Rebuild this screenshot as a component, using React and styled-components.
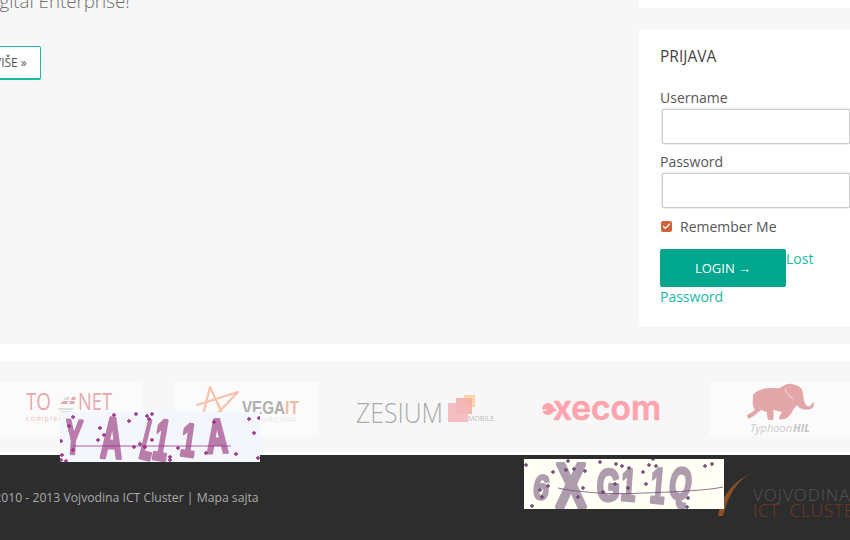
import React from "react";
import styled, { createGlobalStyle } from "styled-components";
import { Check } from "lucide-react";

const GlobalStyle = createGlobalStyle`
  html, body { margin: 0; padding: 0; background: #fff; }
  body { font-family: "Open Sans", "Liberation Sans", sans-serif; overflow: hidden; }
`;

const Page = styled.div`
  position: relative;
  width: 850px;
  height: 540px;
  overflow: hidden;
`;

const Top = styled.section`
  display: flex;
  height: 344px;
  background: #f7f7f7;
`;
const Main = styled.div`
  flex: 1;
  min-width: 0;
  overflow: hidden;
`;
const Lead = styled.p`
  margin: -14px 0 0 -18px;
  font-size: 18.7px;
  font-weight: 300;
  line-height: 30px;
  color: #6e6e6e;
  white-space: nowrap;
`;
const MoreButton = styled.a`
  display: inline-block;
  box-sizing: border-box;
  height: 34px;
  margin: 30px 0 0 -31px;
  padding: 0 13px 0 24px;
  background: #fff;
  border: 1px solid #1abc9c;
  border-bottom-width: 2px;
  border-radius: 2px;
  font-size: 12px;
  line-height: 32px;
  color: #555;
`;
const Sidebar = styled.aside`
  width: 211px;
  flex: none;
`;
const TopStub = styled.div`
  height: 8px;
  margin-bottom: 21px;
  background: #fff;
`;
const LoginBox = styled.div`
  height: 297px;
  box-sizing: border-box;
  padding: 17px 0 0 21px;
  background: #fff;
`;
const BoxTitle = styled.h3`
  margin: 0 0 21px;
  font-size: 15.5px;
  font-weight: 400;
  line-height: 21px;
  color: #444;
`;
const Field = styled.div`
  margin-bottom: 8px;
`;
const Label = styled.label`
  display: block;
  margin-bottom: 1px;
  font-size: 14px;
  line-height: 20px;
  color: #555;
`;
const Input = styled.input`
  display: block;
  box-sizing: border-box;
  width: 188px;
  height: 35px;
  margin-left: 2px;
  background: #fff;
  border: 1px solid #ccc;
  box-shadow: 0 0 0 0.5px #ddd;
  border-radius: 2px;
`;
const RememberRow = styled.div`
  display: flex;
  align-items: center;
  gap: 8px;
  height: 20px;
  margin: 8px 0 13px 1px;
  font-size: 14px;
  color: #555;
`;
const CheckBox = styled.span`
  display: flex;
  align-items: center;
  justify-content: center;
  width: 11px;
  height: 11px;
  background: #d2623a;
  border-radius: 2px;
  color: #fff;
`;
const Actions = styled.div`
  width: 168px;
  font-size: 14px;
  line-height: 20px;
`;
const LoginButton = styled.button`
  display: inline-block;
  vertical-align: top;
  width: 126px;
  height: 38px;
  padding: 0;
  background: #00a68d;
  border: 0;
  border-radius: 2px;
  font-family: inherit;
  font-size: 13px;
  color: #fff;
`;
const TextLink = styled.a`
  color: #1ab8a4;
`;

const Gap = styled.div`
  height: 17px;
  background: #fff;
`;
const LogoBand = styled.section`
  display: flex;
  gap: 34px;
  height: 91px;
  box-sizing: border-box;
  padding: 21px 0 0 0;
  margin-bottom: 3px;
  background: #f7f7f7;
  overflow: hidden;
`;
const LogoCell = styled.div`
  flex: none;
  width: 144px;
  height: 54px;
  margin-left: ${(p) => p.$shift || 0}px;
  background: ${(p) => (p.$plate ? "rgba(255,255,255,0.55)" : "transparent")};
`;
const LogoArt = styled.svg`
  display: block;
  width: 144px;
  height: 54px;
  overflow: hidden;
`;

const Footer = styled.footer`
  display: flex;
  align-items: center;
  justify-content: space-between;
  height: 85px;
  background: #2d2d2d;
  overflow: hidden;
`;
const Copy = styled.p`
  margin: 0 0 0 -19px;
  font-size: 12.2px;
  line-height: 18px;
  color: #aaa;
  white-space: nowrap;
`;
const FooterLogo = styled.svg`
  display: block;
  flex: none;
  width: 135px;
  height: 60px;
  margin-bottom: 5px;
`;

const CaptchaBox = styled.svg`
  position: absolute;
  left: ${(p) => p.$left}px;
  top: ${(p) => p.$top}px;
  width: 200px;
  height: 50px;
  background: ${(p) => p.$bg};
`;
const Blurred = styled.g`
  filter: blur(0.7px);
`;

const Captcha = ({ left, top, bg, ink, dot, chars, dots, line }) => (
  <CaptchaBox $left={left} $top={top} $bg={bg} viewBox="0 0 200 50">
    <Blurred>
      {chars.map((c, i) => (
        <text
          key={i}
          transform={`translate(${c.x} ${c.y}) rotate(${c.r}) scale(${c.sx} ${c.sy})`}
          fontFamily="Liberation Sans, sans-serif"
          fontWeight="700"
          fontSize="30"
          fill={ink}
          stroke={ink}
          strokeWidth="2"
          strokeLinejoin="round"
        >
          {c.t}
        </text>
      ))}
    </Blurred>
    <path d={line} fill="none" stroke={dot} strokeOpacity="0.75" strokeWidth="1.2" />
    {dots.map(([x, y], i) => (
      <path key={i} d={`M${x - 2} ${y}h4M${x} ${y - 2}v4`} stroke={dot} strokeWidth="1.4" />
    ))}
  </CaptchaBox>
);

const firstChars = [
  { t: "Y", x: 4, y: 41, r: 4, sx: 0.85, sy: 1.6 },
  { t: "A", x: 40, y: 45, r: 3, sx: 1.0, sy: 1.9 },
  { t: "L", x: 78, y: 45, r: 14, sx: 0.7, sy: 1.85 },
  { t: "1", x: 91, y: 46, r: 10, sx: 0.9, sy: 1.9 },
  { t: "1", x: 119, y: 43, r: 8, sx: 0.9, sy: 1.55 },
  { t: "A", x: 147, y: 41, r: -2, sx: 1.0, sy: 1.6 },
];
const firstDots = [
  [13, 5], [9, 14], [1, 29], [13, 38], [2, 43], [6, 49], [1, 48], [54, 3], [40, 16], [44, 23],
  [38, 28], [69, 9], [76, 2], [87, 4], [92, 2], [89, 7], [92, 28], [80, 32], [74, 35], [85, 35],
  [118, 36], [110, 45], [110, 48], [146, 41], [154, 10], [176, 42], [189, 7], [194, 21], [199, 6], [198, 46],
];
const secondChars = [
  { t: "6", x: 8, y: 39, r: 8, sx: 0.95, sy: 1.15 },
  { t: "X", x: 32, y: 48, r: 0, sx: 1.5, sy: 2.1 },
  { t: "G", x: 72, y: 41, r: 3, sx: 1.0, sy: 1.5 },
  { t: "1", x: 96, y: 41, r: 4, sx: 0.9, sy: 1.5 },
  { t: "1", x: 125, y: 43, r: 5, sx: 0.9, sy: 1.65 },
  { t: "Q", x: 143, y: 38, r: 10, sx: 0.95, sy: 1.5 },
];
const secondDots = [
  [2, 6], [44, 2], [29, 13], [42, 11], [50, 10], [61, 12], [76, 3], [92, 5], [98, 7], [105, 9],
  [119, 13], [125, 6], [132, 7], [129, 0], [181, 7], [188, 5], [24, 27], [16, 31], [18, 38], [8, 47],
  [59, 29], [54, 38], [91, 25], [104, 29], [122, 25], [79, 33], [164, 39], [163, 48],
];

const ToNetLogo = () => (
  <LogoArt viewBox="0 0 144 54">
    <text x="29" y="28" fontFamily="Open Sans, sans-serif" fontSize="23" fill="#e7a9ab" textLength="25" lengthAdjust="spacingAndGlyphs">TO</text>
    <path d="M63 22l3-3h5l-1 3zM72 22l1-3h5l-1 3zM74 18l1-3h4l-1 3z" fill="#e3a9ab" />
    <path d="M66 18l3-3h4l-1 3zM61 26h16l-2 2H62zM63 29h11l-2 2h-7z" fill="#dedede" />
    <text x="81" y="28" fontFamily="Open Sans, sans-serif" fontSize="23" fill="#e7a9ab" textLength="34" lengthAdjust="spacingAndGlyphs">NET</text>
    <text x="29" y="39" fontFamily="Open Sans, sans-serif" fontSize="7" letterSpacing="1.5" fill="#e9bdbe">complete</text>
  </LogoArt>
);

const VegaLogo = () => (
  <LogoArt viewBox="0 0 144 54">
    <path d="M22 23L63 10L42 32M35 5L48 33M35 5L28 33" fill="none" stroke="#f8c2aa" strokeWidth="2.2" strokeLinejoin="round" strokeLinecap="round" />
    <text x="67" y="32" fontFamily="Liberation Sans, sans-serif" fontWeight="700" fontSize="18" fill="#aeaeae" textLength="43" lengthAdjust="spacingAndGlyphs">VEGA</text>
    <text x="110" y="32" fontFamily="Liberation Sans, sans-serif" fontWeight="700" fontSize="18" fill="#f3bca4" textLength="14" lengthAdjust="spacingAndGlyphs">IT</text>
    <text x="122" y="40" textAnchor="end" fontFamily="Open Sans, sans-serif" fontSize="8" letterSpacing="1" fill="#e6e6e6">OUTSOURCING</text>
  </LogoArt>
);

const ZesiumLogo = () => (
  <LogoArt viewBox="0 0 144 54">
    <text x="3" y="41" fontFamily="Open Sans, sans-serif" fontWeight="300" fontSize="28" fill="#aaa" textLength="87" lengthAdjust="spacingAndGlyphs">ZESIUM</text>
    <rect x="111" y="13" width="11" height="12" fill="#fbd6a8" />
    <rect x="103" y="16" width="16" height="16" fill="#f4b0a8" fillOpacity="0.9" />
    <rect x="95" y="21" width="20" height="19" fill="#f2b8bb" fillOpacity="0.9" />
    <text x="115" y="39" fontFamily="Open Sans, sans-serif" fontSize="6.5" fill="#bbb" textLength="26" lengthAdjust="spacingAndGlyphs">MOBILE</text>
  </LogoArt>
);

const ExecomLogo = () => (
  <LogoArt viewBox="0 0 144 54">
    <circle cx="17" cy="27" r="6" fill="#fda4ae" />
    <path d="M10 28h7" stroke="#f7f7f7" strokeWidth="1.4" />
    <path d="M17 28h7" stroke="#fda4ae" strokeWidth="3" strokeLinecap="round" />
    <text x="22" y="38" fontFamily="Inter, sans-serif" fontWeight="600" fontSize="35" fill="#fda4ae" stroke="#fda4ae" strokeWidth="0.6" strokeLinejoin="round" textLength="108" lengthAdjust="spacingAndGlyphs">xecom</text>
  </LogoArt>
);

const TyphoonLogo = () => (
  <LogoArt viewBox="0 0 144 54">
    <path
      d="M44 13C46 10 50 8 54 7C60 5 66 7 71 6C75 3 79 1 83 2C88 3 92 5 93 8C95 13 94 18 96 21C97 24 99 25 101 24C102 23 103 22 104 20L105 21C105 24 104 26 102 27C99 28 96 28 93 27C91 26 89 25 88 23L84 28C83 31 81 33 78 36C76 37 72 38 70 37C70 34 72 32 73 30L64 28C65 31 65 35 64 38L59 38C58 35 58 32 58 30L52 28C48 31 44 35 39 37L38 33C41 31 44 30 46 28C44 24 43 21 44 18Z"
      fill="#e3a7aa"
    />
    <path d="M76 7C78 11 80 14 84 17" fill="none" stroke="#f7f7f7" strokeWidth="0.7" />
    <text x="41" y="50" fontFamily="Open Sans, sans-serif" fontStyle="italic" fontSize="10" fill="#ccc" textLength="42" lengthAdjust="spacingAndGlyphs">Typhoon</text>
    <text x="84" y="50" fontFamily="Open Sans, sans-serif" fontStyle="italic" fontWeight="700" fontSize="10" fill="#c4c4c4" textLength="17" lengthAdjust="spacingAndGlyphs">HIL</text>
  </LogoArt>
);

export default function App() {
  return (
    <Page>
      <GlobalStyle />
      <Top>
        <Main>
          <Lead>Digital Enterprise!</Lead>
          <MoreButton>VIŠE »</MoreButton>
        </Main>
        <Sidebar>
          <TopStub />
          <LoginBox>
            <BoxTitle>PRIJAVA</BoxTitle>
            <Field>
              <Label>Username</Label>
              <Input type="text" />
            </Field>
            <Field>
              <Label>Password</Label>
              <Input type="password" />
            </Field>
            <RememberRow>
              <CheckBox>
                <Check size={9} strokeWidth={3.5} />
              </CheckBox>
              Remember Me
            </RememberRow>
            <Actions>
              <LoginButton>LOGIN →</LoginButton>
              <TextLink>Lost Password</TextLink>
            </Actions>
          </LoginBox>
        </Sidebar>
      </Top>
      <Gap />
      <LogoBand>
        <LogoCell $plate $shift={-3}><ToNetLogo /></LogoCell>
        <LogoCell $plate><VegaLogo /></LogoCell>
        <LogoCell><ZesiumLogo /></LogoCell>
        <LogoCell><ExecomLogo /></LogoCell>
        <LogoCell $plate><TyphoonLogo /></LogoCell>
      </LogoBand>
      <Footer>
        <Copy>© 2010 - 2013 Vojvodina ICT Cluster | Mapa sajta</Copy>
        <FooterLogo viewBox="0 0 135 60">
          <path d="M45 5.5C30 9 16 20 8 51L3 51C6 30 22 11 45 5.5Z" fill="#8f4f25" />
          <text x="38" y="35.5" fontFamily="Open Sans, sans-serif" fontWeight="300" fontSize="17" letterSpacing="1" fill="#555">VOJVODINA</text>
          <text x="38" y="51.5" fontFamily="Open Sans, sans-serif" fontWeight="300" fontSize="17.5" letterSpacing="0.6" fill="#74391f" xmlSpace="preserve">ICT  CLUSTER</text>
        </FooterLogo>
      </Footer>
      <Captcha
        left={60}
        top={412}
        bg="#f3f6fa"
        ink="#b97cab"
        dot="#9a2f86"
        chars={firstChars}
        dots={firstDots}
        line="M13 34H171"
      />
      <Captcha
        left={524}
        top={459}
        bg="#fffff5"
        ink="#ae9dac"
        dot="#6f4a72"
        chars={secondChars}
        dots={secondDots}
        line="M34 29C50 33 90 36 119 34C150 33 180 32 199 28"
      />
    </Page>
  );
}
